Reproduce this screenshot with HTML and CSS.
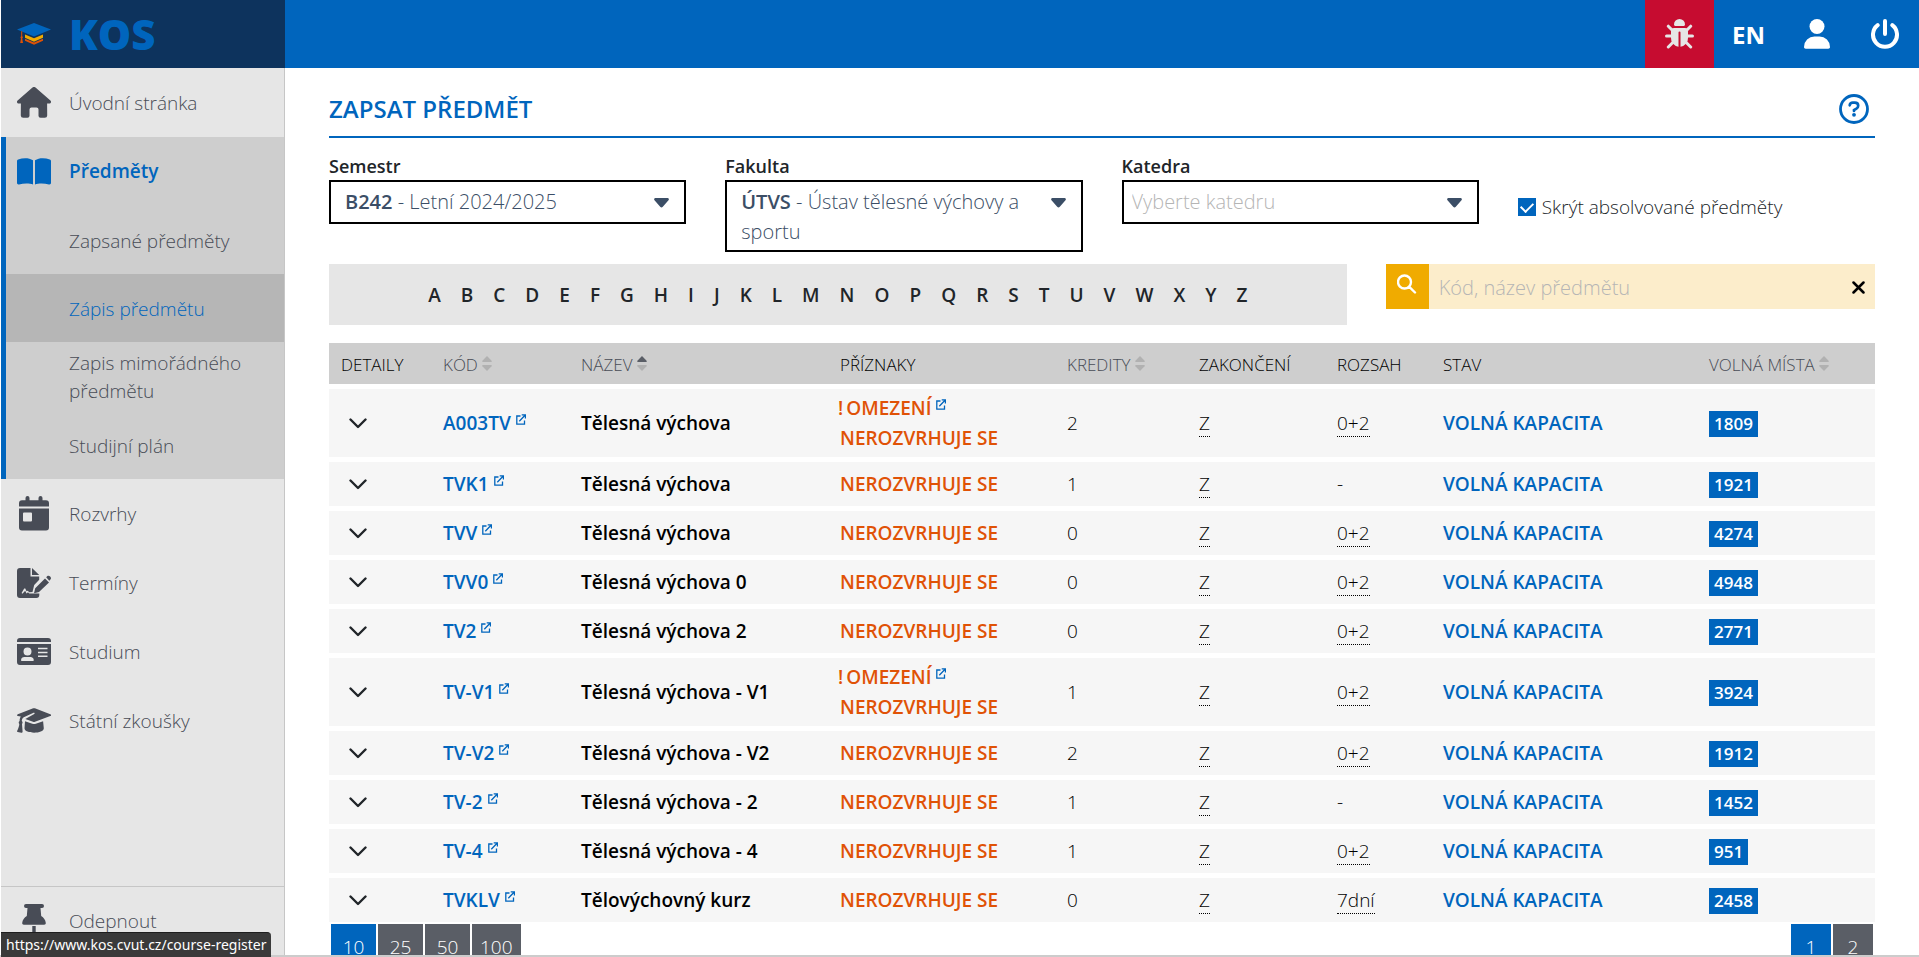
FILE: index.html
```html
<!DOCTYPE html>
<html lang="cs">

<head>
    <meta charset="UTF-8">
    <meta name="viewport" content="width=device-width, initial-scale=1.0">
    <title>KOS - Zapsat předmět</title>
    <link rel="stylesheet" href="styles.css">
</head>

<body>
    <!-- Shared icons -->
    <svg class="icon-defs" aria-hidden="true">
        <symbol id="i-chevron" viewBox="0 0 18 11">
            <path d="M1.5 1.5 9 9l7.500-7.500" fill="none" stroke="currentColor" stroke-width="2.400" stroke-linecap="round" stroke-linejoin="round" />
        </symbol>
        <symbol id="i-external" viewBox="0 0 10 11">
            <path d="M4.500 2H.8v8.200H8.500V6.500M3.300 7.200 9 1.300M5.700.8h3.700v3.700" fill="none" stroke="currentColor" stroke-width="1.300" />
        </symbol>
        <symbol id="i-caret" viewBox="0 0 15 10">
            <path d="M1.500 0h12a1.300 1.300 0 0 1 1 2.200L8.800 8.700a1.800 1.800 0 0 1-2.600 0L.5 2.200a1.300 1.300 0 0 1 1-2.200z" fill="currentColor" />
        </symbol>
        <symbol id="i-sort" viewBox="0 0 10 15">
            <path class="sort-up" d="M5 0 .4 4.700c-.5.6-.2 1.300.6 1.300h8c.8 0 1.100-.7.6-1.300z" />
            <path class="sort-down" d="M5 15 .4 10.300C-.1 9.700.2 9 1 9h8c.8 0 1.100.7.6 1.300z" />
        </symbol>
    </svg>

    <aside class="sidebar">
        <a href="#" class="logo">
            <svg width="34" height="22" viewBox="0 0 34 22" aria-hidden="true">
                <path d="M17 0 34 6.500 17 13.500 0 6.500z" fill="#0065bd" />
                <path d="M8 11.500v3.200l9 4 9-4v-3.200l-9 3.800z" fill="#f0ab00" />
                <path d="M8 15.700v2.100l9 4 9-4v-2.100l-9 3.900z" fill="#e05206" />
                <path d="M4.200 8.200h1V13.200a1.300 1.300 0 0 1 0 2.200l.8 4.600H3.200l.8-4.600a1.300 1.300 0 0 1 .2-2.200z" fill="#e05206" />
            </svg>
            <span>KOS</span>
        </a>
        <nav class="menu">
            <a href="#" class="menu-item">
                <svg width="34" height="31" viewBox="0 0 34 31" aria-hidden="true">
                    <path d="M15.500.6a2.200 2.200 0 0 1 3 0L33.400 13.600c1.300 1.200.5 3-1.200 3h-2.100l.1 11.400a2.500 2.500 0 0 1-2.500 2.700h-4.200a2 2 0 0 1-2-2v-6.200a2 2 0 0 0-2-2h-5a2 2 0 0 0-2 2v6.200a2 2 0 0 1-2 2H6.300A2.500 2.500 0 0 1 3.800 28l.1-11.400H1.800c-1.700 0-2.500-1.800-1.200-3z" />
                </svg>
                Úvodní stránka
            </a>
            <div class="menu-group">
                <a href="#" class="menu-item open">
                    <svg width="34" height="27" viewBox="0 0 34 27" aria-hidden="true">
                        <path d="M16 2.300v24.200C13 25.200 7 25 2 26.400c-1 .3-2-.3-2-1.400V3C0 2.200.4 1.700 1.200 1.400 6-.3 12-.5 16 2.300zM18 2.300v24.200c3-1.300 9-1.500 14-.1 1 .3 2-.3 2-1.400V3c0-.8-.4-1.300-1.200-1.600C28-.3 22-.5 18 2.300z" />
                    </svg>
                    Předměty
                </a>
                <a href="#" class="menu-item sub">Zapsané předměty</a>
                <a href="#" class="menu-item sub active">Zápis předmětu</a>
                <a href="#" class="menu-item sub">Zapis mimořádného předmětu</a>
                <a href="#" class="menu-item sub">Studijní plán</a>
            </div>
            <a href="#" class="menu-item">
                <svg width="34" height="35" viewBox="0 0 34 35" aria-hidden="true">
                    <path d="M10.500 0a2 2 0 0 1 2 2v2.300h9V2a2 2 0 0 1 4 0v2.300H29a3 3 0 0 1 3 3v3.200H2V7.300a3 3 0 0 1 3-3h3.500V2a2 2 0 0 1 2-2z" />
                    <path fill-rule="evenodd" d="M2 12.500h30v19a3 3 0 0 1-3 3H5a3 3 0 0 1-3-3zm5 4a1 1 0 0 0-1 1v7a1 1 0 0 0 1 1h7a1 1 0 0 0 1-1v-7a1 1 0 0 0-1-1z" />
                </svg>
                Rozvrhy
            </a>
            <a href="#" class="menu-item">
                <svg width="34" height="30" viewBox="0 0 34 30" aria-hidden="true">
                    <path d="M3 0h10.500v8.500h8.700v3.200l-5 5.200-1.700 7.100-3.200.2-1.600-1.500-1.200.5-1.200-2.700H7.200L4.600 25l.8.700 2.800-3 1.300 2.700 1.500-1.200 1.300 1.300h10v1.500A3 3 0 0 1 19.300 30H3a3 3 0 0 1-3-3V3a3 3 0 0 1 3-3zM15 0l7.200 7H15z" />
                    <path d="m28 10.500 4 4-10 9.500-5 1.200 1.200-5zM29.200 9.300l1.200-1.200c1.500-1.500 4.700 1.400 3.200 3.100l-1.300 1.500z" />
                </svg>
                Termíny
            </a>
            <a href="#" class="menu-item">
                <svg width="34" height="27" viewBox="0 0 34 27" aria-hidden="true">
                    <path d="M3 0h28a3 3 0 0 1 3 3v1H0V3a3 3 0 0 1 3-3z" />
                    <path fill-rule="evenodd" d="M0 6h34v18a3 3 0 0 1-3 3H3a3 3 0 0 1-3-3zm10.500 3.500a4 4 0 1 0 0 8 4 4 0 0 0 0-8zM7.500 19A3.500 3.500 0 0 0 4 22.200c0 .5.300.8.800.8H16c.5 0 .8-.3.800-.8A3.500 3.500 0 0 0 13.500 19zM21 9.800v1.500h9.500V9.800zm0 3.900v1.500h9.500v-1.500zm0 3.900v1.500h9.500v-1.500z" />
                </svg>
                Studium
            </a>
            <a href="#" class="menu-item">
                <svg width="34" height="25" viewBox="0 0 34 25" aria-hidden="true">
                    <path d="M.800 6.300 16.200.3a2.500 2.500 0 0 1 1.700 0L33.300 6.200c1 .4 1 1.500 0 1.900L18 13.700a3 3 0 0 1-2 0L8.300 11l9.400-5.300-.6-1.200L6.800 9.200C5.300 10 4.800 11.500 4.800 13c1 .8 1 2.200.2 3l.6 7.500c0 .9-.5 1.300-1.300 1.200l-3.600-.6c-.6-.1-.8-.6-.6-1.200C1.500 20 2.300 18 2.300 16c-.9-1-.8-2.400.3-3.100 0-1.700.4-3 1.200-4.300L.800 8.100c-1-.4-1-1.400 0-1.800z" />
                    <path d="m8 13.300 7.300 2.500c1.200.4 2.400.4 3.500 0l7.300-2.500.7 7c0 5.900-19.300 5.900-19.300 0z" />
                </svg>
                Státní zkoušky
            </a>
        </nav>
        <button type="button" class="menu-item unpin">
            <svg width="34" height="34" viewBox="0 0 34 34" aria-hidden="true">
                <path d="M9 0h16a2 2 0 0 1 0 4h-1.500l.7 8c2.500 1.500 4.300 4 4.600 7 0 1-.6 1.700-1.600 1.700H6.800c-1 0-1.600-.7-1.600-1.700.3-3 2.100-5.500 4.600-7l.7-8H9a2 2 0 0 1 0-4zM15.300 22h3.400v10a1.700 1.700 0 0 1-3.400 0z" />
            </svg>
            Odepnout
        </button>
    </aside>

    <div class="page">
        <header class="topbar">
            <button type="button" class="topbar-btn bug" aria-label="Nahlásit chybu">
                <svg width="29" height="30" viewBox="0 0 29 30" aria-hidden="true">
                    <path d="M14.500 0A5.500 5.500 0 0 1 20 5.500c0 .9-.6 1.500-1.500 1.500h-8C9.600 7 9 6.400 9 5.500A5.500 5.500 0 0 1 14.500 0z" />
                    <path d="M9 9h11c2 0 3 1.500 3 3.500V19a8.500 8.500 0 0 1-7.500 8.800V13.500a1 1 0 0 0-2 0v14.300A8.500 8.500 0 0 1 6 19v-6.500C6 10.500 7 9 9 9z" />
                    <path d="m3.300 7.200 4.500 4.500M25.700 7.200l-4.500 4.500M1.500 17H7M27.500 17H22M3.300 28l5-5M25.700 28l-5-5" fill="none" stroke="currentColor" stroke-width="3" stroke-linecap="round" />
                </svg>
            </button>
            <button type="button" class="topbar-btn lang">EN</button>
            <button type="button" class="topbar-btn" aria-label="Uživatel">
                <svg width="26" height="30" viewBox="0 0 26 30" aria-hidden="true">
                    <circle cx="13" cy="7.500" r="7.500" />
                    <path d="M10.500 17.500h5A10.500 10.500 0 0 1 26 28c0 1-.8 1.700-1.700 1.700H1.700C.8 29.700 0 29 0 28a10.500 10.500 0 0 1 10.500-10.500z" />
                </svg>
            </button>
            <button type="button" class="topbar-btn" aria-label="Odhlásit">
                <svg width="28" height="30" viewBox="0 0 28 30" aria-hidden="true">
                    <path d="M14 2v13M6.700 6.200a12 12 0 1 0 14.600 0" fill="none" stroke="currentColor" stroke-width="4" stroke-linecap="round" />
                </svg>
            </button>
        </header>

        <main class="content">
            <div class="title-row">
                <h1>ZAPSAT PŘEDMĚT</h1>
                <button type="button" class="help" aria-label="Nápověda">
                    <svg width="30" height="30" viewBox="0 0 30 30" aria-hidden="true">
                        <circle cx="15" cy="15" r="13.500" fill="none" stroke="currentColor" stroke-width="2.800" />
                        <path d="M10.700 11.300c.3-1.800 1.500-2.600 3.100-2.600h2c2 0 3.400 1.300 3.400 3.100 0 1.300-.6 2.200-1.700 2.800L15 16v1" fill="none" stroke="currentColor" stroke-width="2.700" stroke-linecap="round" />
                        <circle cx="15" cy="20.800" r="1.900" />
                    </svg>
                </button>
            </div>

            <form class="filters">
                <div class="field">
                    <label for="semester">Semestr</label>
                    <div class="dropdown">
                        <select id="semester">
                            <button><selectedcontent></selectedcontent></button>
                            <option selected><b>B242</b> - Letní 2024/2025</option>
                        </select>
                        <svg class="caret" aria-hidden="true"><use href="#i-caret" /></svg>
                    </div>
                </div>
                <div class="field">
                    <label for="faculty">Fakulta</label>
                    <div class="dropdown">
                        <select id="faculty">
                            <button><selectedcontent></selectedcontent></button>
                            <option selected><b>ÚTVS</b> - Ústav tělesné výchovy a sportu</option>
                        </select>
                        <svg class="caret" aria-hidden="true"><use href="#i-caret" /></svg>
                    </div>
                </div>
                <div class="field">
                    <label for="department">Katedra</label>
                    <div class="dropdown">
                        <select id="department" class="empty">
                            <button><selectedcontent></selectedcontent></button>
                            <option selected>Vyberte katedru</option>
                        </select>
                        <svg class="caret" aria-hidden="true"><use href="#i-caret" /></svg>
                    </div>
                </div>
                <div class="check">
                    <input type="checkbox" id="hide-done" checked>
                    <label for="hide-done">Skrýt absolvované předměty</label>
                </div>
            </form>

            <div class="search-row">
                <div class="letters">
                    <a href="#">A</a><a href="#">B</a><a href="#">C</a><a href="#">D</a><a href="#">E</a><a href="#">F</a><a href="#">G</a><a href="#">H</a><a href="#">I</a><a href="#">J</a><a href="#">K</a><a href="#">L</a><a href="#">M</a><a href="#">N</a><a href="#">O</a><a href="#">P</a><a href="#">Q</a><a href="#">R</a><a href="#">S</a><a href="#">T</a><a href="#">U</a><a href="#">V</a><a href="#">W</a><a href="#">X</a><a href="#">Y</a><a href="#">Z</a>
                </div>
                <form class="search">
                    <button type="submit" class="search-btn" aria-label="Hledat">
                        <svg width="20" height="20" viewBox="0 0 20 20" aria-hidden="true">
                            <path d="M14 8a6.500 6.500 0 1 1-13 0 6.500 6.500 0 0 1 13 0zM12.300 12.800l5.700 5.700" fill="none" stroke="currentColor" stroke-width="2.400" stroke-linecap="round" />
                        </svg>
                    </button>
                    <input type="text" placeholder="Kód, název předmětu" aria-label="Kód, název předmětu">
                    <button type="reset" class="clear-btn" aria-label="Smazat">
                        <svg width="13" height="13" viewBox="0 0 13 13" aria-hidden="true">
                            <path d="m1.500 1.500 10 10M11.500 1.500l-10 10" stroke="currentColor" stroke-width="2.500" stroke-linecap="round" />
                        </svg>
                    </button>
                </form>
            </div>

            <table class="courses">
                <colgroup>
                    <col class="c-details"><col class="c-code"><col class="c-name"><col class="c-flags"><col class="c-credits"><col class="c-finish"><col class="c-range"><col class="c-state"><col class="c-free">
                </colgroup>
                <thead>
                    <tr>
                        <th>DETAILY</th>
                        <th class="sortable">KÓD <svg class="sort"><use href="#i-sort" /></svg></th>
                        <th class="sortable">NÁZEV <svg class="sort asc"><use href="#i-sort" /></svg></th>
                        <th>PŘÍZNAKY</th>
                        <th class="sortable">KREDITY <svg class="sort"><use href="#i-sort" /></svg></th>
                        <th>ZAKONČENÍ</th>
                        <th>ROZSAH</th>
                        <th>STAV</th>
                        <th class="sortable">VOLNÁ MÍSTA <svg class="sort"><use href="#i-sort" /></svg></th>
                    </tr>
                </thead>
                <tbody>
                    <tr>
                        <td><button type="button" class="toggle" aria-label="Detaily"><svg><use href="#i-chevron" /></svg></button></td>
                        <td><a href="#" class="code">A003TV <svg class="ext"><use href="#i-external" /></svg></a></td>
                        <td class="name">Tělesná výchova</td>
                        <td class="flags">
                            <div class="limit"><span class="mark">!</span>OMEZENÍ <a href="#" aria-label="Omezení"><svg class="ext"><use href="#i-external" /></svg></a></div>
                            <div>NEROZVRHUJE SE</div>
                        </td>
                        <td>2</td>
                        <td><abbr title="Zápočet">Z</abbr></td>
                        <td><abbr title="Rozsah">0+2</abbr></td>
                        <td class="state">VOLNÁ KAPACITA</td>
                        <td><span class="free">1809</span></td>
                    </tr>
                    <tr>
                        <td><button type="button" class="toggle" aria-label="Detaily"><svg><use href="#i-chevron" /></svg></button></td>
                        <td><a href="#" class="code">TVK1 <svg class="ext"><use href="#i-external" /></svg></a></td>
                        <td class="name">Tělesná výchova</td>
                        <td class="flags">NEROZVRHUJE SE</td>
                        <td>1</td>
                        <td><abbr title="Zápočet">Z</abbr></td>
                        <td>-</td>
                        <td class="state">VOLNÁ KAPACITA</td>
                        <td><span class="free">1921</span></td>
                    </tr>
                    <tr>
                        <td><button type="button" class="toggle" aria-label="Detaily"><svg><use href="#i-chevron" /></svg></button></td>
                        <td><a href="#" class="code">TVV <svg class="ext"><use href="#i-external" /></svg></a></td>
                        <td class="name">Tělesná výchova</td>
                        <td class="flags">NEROZVRHUJE SE</td>
                        <td>0</td>
                        <td><abbr title="Zápočet">Z</abbr></td>
                        <td><abbr title="Rozsah">0+2</abbr></td>
                        <td class="state">VOLNÁ KAPACITA</td>
                        <td><span class="free">4274</span></td>
                    </tr>
                    <tr>
                        <td><button type="button" class="toggle" aria-label="Detaily"><svg><use href="#i-chevron" /></svg></button></td>
                        <td><a href="#" class="code">TVV0 <svg class="ext"><use href="#i-external" /></svg></a></td>
                        <td class="name">Tělesná výchova 0</td>
                        <td class="flags">NEROZVRHUJE SE</td>
                        <td>0</td>
                        <td><abbr title="Zápočet">Z</abbr></td>
                        <td><abbr title="Rozsah">0+2</abbr></td>
                        <td class="state">VOLNÁ KAPACITA</td>
                        <td><span class="free">4948</span></td>
                    </tr>
                    <tr>
                        <td><button type="button" class="toggle" aria-label="Detaily"><svg><use href="#i-chevron" /></svg></button></td>
                        <td><a href="#" class="code">TV2 <svg class="ext"><use href="#i-external" /></svg></a></td>
                        <td class="name">Tělesná výchova 2</td>
                        <td class="flags">NEROZVRHUJE SE</td>
                        <td>0</td>
                        <td><abbr title="Zápočet">Z</abbr></td>
                        <td><abbr title="Rozsah">0+2</abbr></td>
                        <td class="state">VOLNÁ KAPACITA</td>
                        <td><span class="free">2771</span></td>
                    </tr>
                    <tr>
                        <td><button type="button" class="toggle" aria-label="Detaily"><svg><use href="#i-chevron" /></svg></button></td>
                        <td><a href="#" class="code">TV-V1 <svg class="ext"><use href="#i-external" /></svg></a></td>
                        <td class="name">Tělesná výchova - V1</td>
                        <td class="flags">
                            <div class="limit"><span class="mark">!</span>OMEZENÍ <a href="#" aria-label="Omezení"><svg class="ext"><use href="#i-external" /></svg></a></div>
                            <div>NEROZVRHUJE SE</div>
                        </td>
                        <td>1</td>
                        <td><abbr title="Zápočet">Z</abbr></td>
                        <td><abbr title="Rozsah">0+2</abbr></td>
                        <td class="state">VOLNÁ KAPACITA</td>
                        <td><span class="free">3924</span></td>
                    </tr>
                    <tr>
                        <td><button type="button" class="toggle" aria-label="Detaily"><svg><use href="#i-chevron" /></svg></button></td>
                        <td><a href="#" class="code">TV-V2 <svg class="ext"><use href="#i-external" /></svg></a></td>
                        <td class="name">Tělesná výchova - V2</td>
                        <td class="flags">NEROZVRHUJE SE</td>
                        <td>2</td>
                        <td><abbr title="Zápočet">Z</abbr></td>
                        <td><abbr title="Rozsah">0+2</abbr></td>
                        <td class="state">VOLNÁ KAPACITA</td>
                        <td><span class="free">1912</span></td>
                    </tr>
                    <tr>
                        <td><button type="button" class="toggle" aria-label="Detaily"><svg><use href="#i-chevron" /></svg></button></td>
                        <td><a href="#" class="code">TV-2 <svg class="ext"><use href="#i-external" /></svg></a></td>
                        <td class="name">Tělesná výchova - 2</td>
                        <td class="flags">NEROZVRHUJE SE</td>
                        <td>1</td>
                        <td><abbr title="Zápočet">Z</abbr></td>
                        <td>-</td>
                        <td class="state">VOLNÁ KAPACITA</td>
                        <td><span class="free">1452</span></td>
                    </tr>
                    <tr>
                        <td><button type="button" class="toggle" aria-label="Detaily"><svg><use href="#i-chevron" /></svg></button></td>
                        <td><a href="#" class="code">TV-4 <svg class="ext"><use href="#i-external" /></svg></a></td>
                        <td class="name">Tělesná výchova - 4</td>
                        <td class="flags">NEROZVRHUJE SE</td>
                        <td>1</td>
                        <td><abbr title="Zápočet">Z</abbr></td>
                        <td><abbr title="Rozsah">0+2</abbr></td>
                        <td class="state">VOLNÁ KAPACITA</td>
                        <td><span class="free">951</span></td>
                    </tr>
                    <tr>
                        <td><button type="button" class="toggle" aria-label="Detaily"><svg><use href="#i-chevron" /></svg></button></td>
                        <td><a href="#" class="code">TVKLV <svg class="ext"><use href="#i-external" /></svg></a></td>
                        <td class="name">Tělovýchovný kurz</td>
                        <td class="flags">NEROZVRHUJE SE</td>
                        <td>0</td>
                        <td><abbr title="Zápočet">Z</abbr></td>
                        <td><abbr title="Rozsah">7dní</abbr></td>
                        <td class="state">VOLNÁ KAPACITA</td>
                        <td><span class="free">2458</span></td>
                    </tr>
                </tbody>
            </table>

            <div class="paging">
                <div class="pages sizes">
                    <button type="button" class="current">10</button>
                    <button type="button">25</button>
                    <button type="button">50</button>
                    <button type="button">100</button>
                </div>
                <div class="pages">
                    <button type="button" class="current">1</button>
                    <button type="button">2</button>
                </div>
            </div>
        </main>
    </div>

    <div class="status-bar">https://www.kos.cvut.cz/course-register</div>
</body>

</html>
```
FILE: styles.css
```css
* {
    box-sizing: border-box;
}

body {
    display: flex;
    height: 100vh;
    margin: 0;
    padding-left: 1px;
    overflow: hidden;
    border-bottom: 2px solid #ccc;
    background-color: #fff;
    color: #212529;
    font-family: "Open Sans", "Noto Sans", sans-serif;
    font-size: 19px;
    font-weight: 300;
    line-height: 30px;
}

a {
    color: #0065bd;
    text-decoration: none;
}

button,
input,
select {
    font: inherit;
    color: inherit;
}

button {
    padding: 0;
    border: none;
    background: none;
    cursor: pointer;
}

svg {
    flex: none;
    fill: currentColor;
}

.icon-defs {
    position: absolute;
    width: 0;
    height: 0;
}

/* Sidebar */
.sidebar {
    display: flex;
    flex: none;
    flex-direction: column;
    width: 284px;
    border-right: 1px solid #c6c6c6;
    background-color: #e6e6e6;
}

.logo {
    display: flex;
    align-items: center;
    gap: 18px;
    height: 68px;
    margin-right: -1px;
    padding-left: 16px;
    background-color: #0d335d;
    font-size: 42px;
    font-weight: 800;
}

.menu {
    flex: 1;
}

.menu-item {
    display: flex;
    align-items: center;
    gap: 18px;
    width: 100%;
    min-height: 69px;
    padding: 0 20px 0 16px;
    color: #484c56;
    line-height: 28px;
    text-align: left;
}

.menu-group {
    display: grid;
    grid-auto-rows: 1fr;
    height: 342px;
    border-left: 5px solid #0065bd;
    background-color: #cecece;
}

.menu-group .menu-item {
    min-height: 0;
    padding-left: 11px;
}

.menu-group .sub {
    padding-top: 2px;
    padding-left: 63px;
}

.menu-item.open {
    color: #0065bd;
    font-weight: 600;
}

.menu-item.active {
    background-color: #b6b6b6;
    color: #0065bd;
}

.unpin {
    border-top: 1px solid #c6c6c6;
}

/* Top bar */
.page {
    flex: 1;
    min-width: 0;
}

.topbar {
    display: flex;
    justify-content: flex-end;
    height: 68px;
    background-color: #0065bd;
}

.topbar-btn {
    display: flex;
    align-items: center;
    justify-content: center;
    width: 68px;
    color: #fff;
}

.bug {
    width: 69px;
    background-color: #c60c30;
    color: #e6e6e6;
}

.lang {
    width: 69px;
    padding-top: 2px;
    font-size: 24px;
    font-weight: 700;
}

/* Content */
.content {
    padding: 14px 44px 0;
}

.title-row {
    display: flex;
    align-items: center;
    justify-content: space-between;
    height: 56px;
    padding-right: 6px;
    border-bottom: 2px solid #0065bd;
    color: #0065bd;
}

h1 {
    margin: 0;
    font-size: 24px;
    font-weight: 600;
}

.help {
    display: flex;
}

.filters {
    display: grid;
    grid-template-columns: repeat(4, 1fr);
    align-items: start;
    gap: 39px;
    padding-top: 14px;
}

.field label {
    display: block;
    height: 28px;
    font-size: 18px;
    font-weight: 600;
    line-height: 28px;
}

.dropdown {
    display: flex;
    position: relative;
    align-items: flex-start;
    min-height: 44px;
    padding: 5px 15px 3px 14px;
    border: 2px solid #000;
    color: #3b4e66;
}

/* Rich option content, wraps when the name is long */
.dropdown select {
    display: block;
    flex: 1;
    min-width: 0;
    min-height: 30px;
    padding: 0 20px 0 0;
    border: none;
    outline: none;
    background: none;
    font-size: 20px;
    white-space: normal;
    appearance: base-select;
}

.dropdown select::picker-icon {
    display: none;
}

.dropdown b {
    font-weight: 600;
}

.dropdown .empty {
    margin-left: -6px;
    color: #b5b5b5;
}

.caret {
    width: 15px;
    height: 10px;
    margin-top: 11px;
    pointer-events: none;
}

.check {
    display: flex;
    align-items: center;
    gap: 6px;
    padding-top: 40px;
}

.check input {
    display: grid;
    place-items: center;
    width: 18px;
    height: 18px;
    margin: 0;
    border: 1px solid #0065bd;
    appearance: none;
}

.check input:checked {
    background-color: #0065bd;
}

.check input:checked::after {
    content: "";
    width: 6px;
    height: 10px;
    margin-bottom: 3px;
    border: solid #fff;
    border-width: 0 2px 2px 0;
    transform: rotate(45deg);
}

.search-row {
    display: grid;
    grid-template-columns: repeat(12, 1fr);
    align-items: start;
    gap: 39px;
    margin: 12px 0 13px;
}

.letters {
    display: flex;
    grid-column: span 8;
    justify-content: center;
    gap: 20px;
    padding: 16px 0 15px;
    background-color: #e6e6e6;
    font-weight: 600;
}

.letters a {
    color: #212529;
}

.search {
    display: flex;
    grid-column: span 4;
    height: 45px;
    background-color: #fcedcb;
}

.search-btn {
    width: 43px;
    background-color: #f0ab00;
    color: #fff;
}

.search input {
    flex: 1;
    min-width: 0;
    padding: 2px 10px 0;
    border: none;
    background: none;
    font-size: 20px;
}

.search input::placeholder {
    color: #b5b5b5;
}

.clear-btn {
    width: 34px;
    color: #000;
}

/* Course table */
.courses {
    width: 100%;
    border-spacing: 0 5px;
    table-layout: fixed;
    color: #000;
}

.c-details { width: 102px; }
.c-code { width: 138px; }
.c-name { width: 259px; }
.c-flags { width: 227px; }
.c-credits { width: 132px; }
.c-finish { width: 138px; }
.c-range { width: 106px; }
.c-state { width: 266px; }
.c-free { width: 178px; }

.courses th {
    height: 41px;
    padding: 2px 12px 0;
    background-color: #cecece;
    font-size: 17px;
    font-weight: 300;
    text-align: left;
    white-space: nowrap;
}

.courses .sortable {
    color: #484c56;
}

.sort {
    width: 10px;
    height: 15px;
    color: #b1b1b1;
}

.sort.asc {
    --up: #5a5e66;
}

.sort-up {
    fill: var(--up, currentColor);
}

.courses td {
    height: 44px;
    padding: 4px 12px;
    background-color: #f6f6f6;
}

.toggle {
    display: block;
    padding: 6px 8px;
    color: #212529;
    line-height: 0;
}

.toggle svg {
    width: 18px;
    height: 11px;
}

.code,
.name,
.flags,
.state {
    font-weight: 600;
}

.ext {
    width: 10px;
    height: 11px;
    vertical-align: 5px;
}

.flags {
    color: #e05206;
}

.limit {
    margin-left: -2px;
}

.mark {
    margin-right: 3px;
}

.state {
    color: #0065bd;
}

abbr {
    border-bottom: 1px dotted #000;
    text-decoration: none;
}

.free {
    display: inline-block;
    padding: 0 5px;
    background-color: #0065bd;
    color: #fff;
    font-size: 17px;
    font-weight: 600;
    line-height: 26px;
}

/* Paging */
.paging {
    display: flex;
    justify-content: space-between;
    margin-top: -3px;
    padding: 0 2px;
}

.pages {
    display: flex;
    gap: 2px;
}

.pages button {
    min-width: 40px;
    height: 45px;
    padding: 0 8px;
    background-color: #5a5e66;
    color: #fff;
}

.sizes button {
    min-width: 45px;
}

.pages .current {
    background-color: #0065bd;
}

/* Link preview in the window corner */
.status-bar {
    position: fixed;
    bottom: 0;
    left: 1px;
    padding: 0 5px;
    border-top: 1px solid #1e1e1e;
    border-radius: 0 4px 0 0;
    background-color: #3a3a3a;
    color: #fff;
    font-family: "Noto Sans", sans-serif;
    font-size: 14px;
    font-weight: 400;
    line-height: 24px;
}
```
